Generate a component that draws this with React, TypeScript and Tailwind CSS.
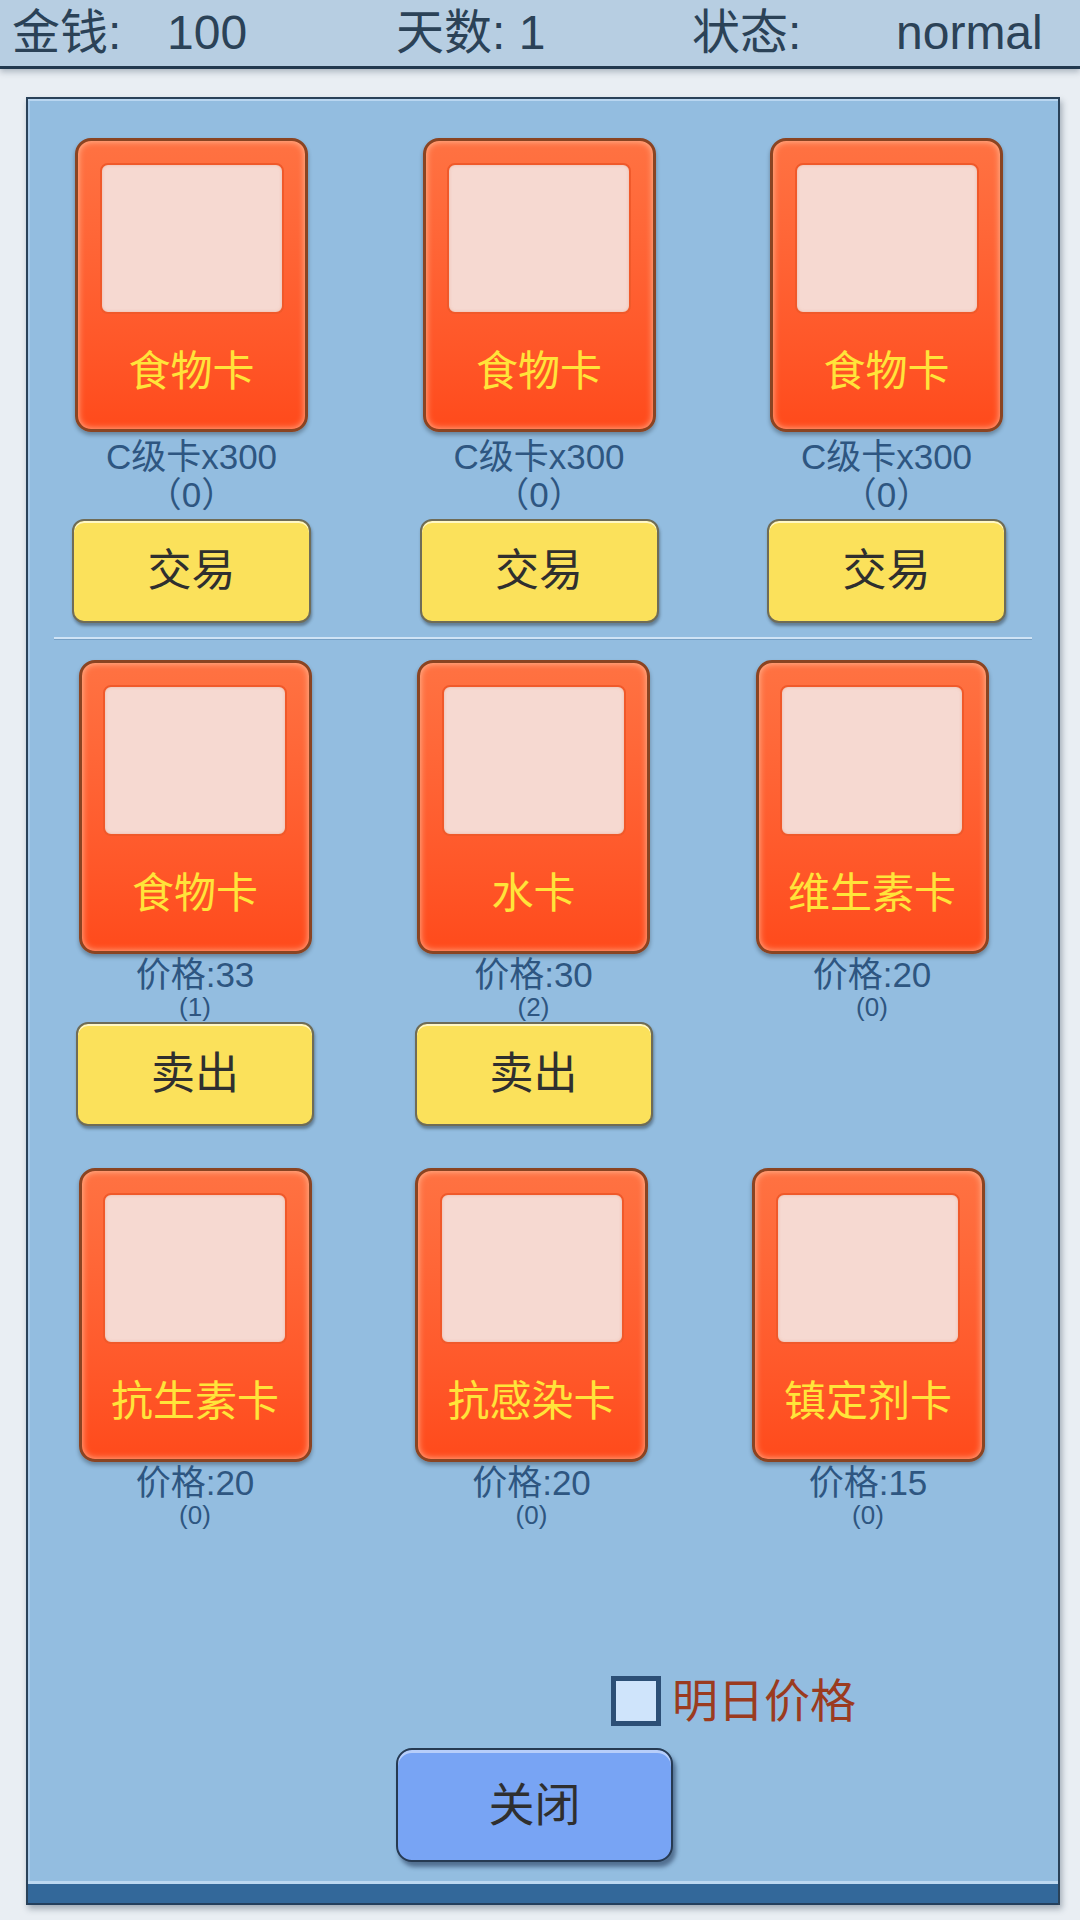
import React from "react";

const FONT = { fontFamily: '"Liberation Sans", "Noto Sans CJK SC", sans-serif' };

function Card({ label }: { label: string }) {
  return (
    <div className="w-[233px] h-[294px] rounded-[16px] border-[3px] border-[#8a4422] bg-linear-to-b from-[#ff7242] to-[#ff4a1b] shadow-[0_3px_4px_rgba(0,0,0,0.3),inset_0_0_7px_rgba(255,215,185,0.8)] flex flex-col items-center pt-[22px]">
      <div className="w-[184px] h-[151px] shrink-0 rounded-[8px] border-2 border-[#f0592a] bg-[#f6d9d1] shadow-[inset_0_0_3px_rgba(230,150,120,0.5)]" />
      <div className="flex-1 flex items-center justify-center text-[42px] leading-none text-[#ffe43a]">{label}</div>
    </div>
  );
}

function YellowButton({ text }: { text: string }) {
  return (
    <div className="w-full h-[104px] rounded-[12px] border-2 border-[#6f6c57] bg-[#fbe15b] shadow-[1px_3px_3px_rgba(40,50,60,0.45),inset_0_2px_0_rgba(255,250,210,0.9)] flex items-center justify-center text-[44px] text-[#2f2f2f]">
      {text}
    </div>
  );
}

function TopCol() {
  return (
    <div className="w-[239px] flex flex-col items-center">
      <Card label="食物卡" />
      <div className="mt-[6px] h-[38px] leading-[38px] text-[35px] text-[#2e5681]">C级卡x300</div>
      <div className="h-[38px] leading-[38px] text-[35px] text-[#2e5681]">（0）</div>
      <div className="mt-[5px] w-full">
        <YellowButton text="交易" />
      </div>
    </div>
  );
}

function PriceCol({ label, price, count, sell }: { label: string; price: number; count: number; sell?: boolean }) {
  return (
    <div className="w-[238px] flex flex-col items-center">
      <Card label={label} />
      <div className="mt-[3px] h-[36px] leading-[36px] text-[35px] text-[#2e5681]">价格:{price}</div>
      <div className="h-[28px] leading-[28px] text-[26px] text-[#2e5681]">({count})</div>
      {sell ? (
        <div className="mt-[1px] w-full">
          <YellowButton text="卖出" />
        </div>
      ) : (
        <div className="mt-[1px] h-[104px]" />
      )}
    </div>
  );
}

export default function App() {
  return (
    <div className="w-[1080px] h-[1920px] bg-[#e9eef3] overflow-hidden" style={FONT}>
      <div className="h-[69px] bg-[#b7cee2] border-b-[3px] border-[#22394f] shadow-[0_3px_6px_rgba(40,60,80,0.3)] flex items-center pl-[12px] text-[48px] text-[#2b4257] leading-none">
        <span className="w-[155px]">金钱:</span>
        <span className="w-[229px]">100</span>
        <span className="w-[296px]">天数: 1</span>
        <span className="w-[204px]">状态:</span>
        <span>normal</span>
      </div>

      <div className="ml-[26px] mt-[28px] w-[1034px] h-[1808px] border-2 border-b-0 border-[#2a4259] bg-[#93bde0] shadow-[2px_4px_6px_rgba(30,50,70,0.35),inset_0_2px_0_#b9d6f0,inset_2px_0_0_#a9cbea] flex flex-col">
        <div className="pt-[39px] pl-[44px] pr-[52px] flex justify-between">
          <TopCol />
          <TopCol />
          <TopCol />
        </div>

        <div className="mt-[14px] mx-[26px] h-[2px] bg-[#cfe3f5] shadow-[0_1px_0_rgba(70,110,150,0.35)]" />

        <div className="mt-[21px] pl-[48px] pr-[67px] flex justify-between">
          <PriceCol label="食物卡" price={33} count={1} sell />
          <PriceCol label="水卡" price={30} count={2} sell />
          <PriceCol label="维生素卡" price={20} count={0} />
        </div>

        <div className="mt-[42px] pl-[48px] pr-[71px] flex justify-between">
          <PriceCol label="抗生素卡" price={20} count={0} />
          <PriceCol label="抗感染卡" price={20} count={0} />
          <PriceCol label="镇定剂卡" price={15} count={0} />
        </div>

        <div className="mt-[42px] pl-[583px] flex items-center">
          <div className="w-[50px] h-[50px] border-[5px] border-[#2c4f76] bg-[#cfe4fb]" />
          <span className="ml-[11px] text-[46px] leading-none text-[#9b3b1f]">明日价格</span>
        </div>

        <div className="mt-[22px] ml-[368px] w-[277px] h-[114px] rounded-[16px] border-2 border-[#263a52] bg-[#78a4f4] shadow-[3px_5px_4px_rgba(30,50,80,0.55),inset_0_3px_0_#b7cefa] flex items-center justify-center text-[46px] text-[#2f2f2f]">
          关闭
        </div>

        <div className="mt-auto border-t-[3px] border-[#bcd8f1] h-[24px] bg-[#33689a] border-b-2 border-b-[#243f5c]" />
      </div>
    </div>
  );
}
